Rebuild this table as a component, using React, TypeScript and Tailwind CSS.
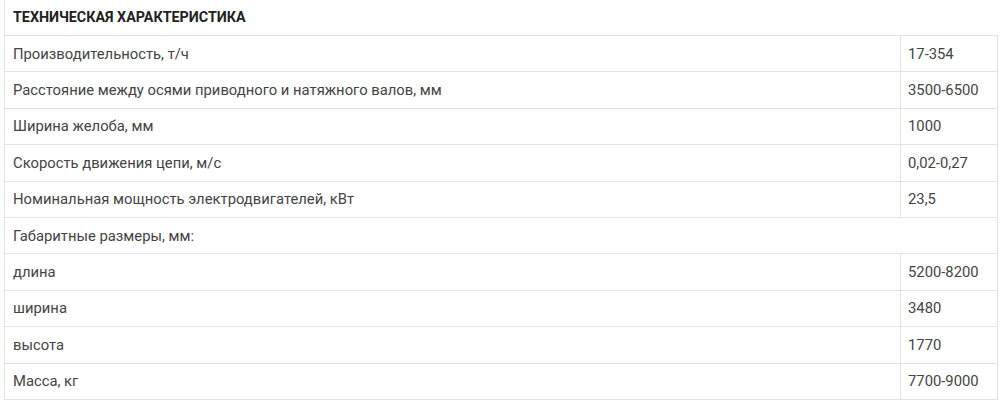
const rows: [string, string | null][] = [
  ["Производительность, т/ч", "17-354"],
  ["Расстояние между осями приводного и натяжного валов, мм", "3500-6500"],
  ["Ширина желоба, мм", "1000"],
  ["Скорость движения цепи, м/с", "0,02-0,27"],
  ["Номинальная мощность электродвигателей, кВт", "23,5"],
  ["Габаритные размеры, мм:", null],
  ["длина", "5200-8200"],
  ["ширина", "3480"],
  ["высота", "1770"],
  ["Масса, кг", "7700-9000"],
];

export default function App() {
  return (
    <div className="w-[1000px] h-[403px] bg-white pl-[4px] pr-[2px] font-['Roboto',sans-serif]">
      <div className="h-[36px] border-l border-b border-[#e3e3e3] flex items-center pl-[8px] text-[14.3px] font-bold text-[#222] uppercase">
        Техническая характеристика
      </div>
      {rows.map(([label, value]) =>
        value === null ? (
          <div key={label} className="h-[36.4px] border-x border-b border-[#e3e3e3] flex items-center pl-[8px] text-[14.8px] text-[#444]">
            {label}
          </div>
        ) : (
          <div key={label} className="h-[36.4px] border-x border-b border-[#e3e3e3] grid grid-cols-[896px_1fr] text-[14.8px] text-[#444]">
            <div className="border-r border-[#e3e3e3] flex items-center pl-[8px]">{label}</div>
            <div className="flex items-center pl-[7px]">{value}</div>
          </div>
        )
      )}
    </div>
  );
}
